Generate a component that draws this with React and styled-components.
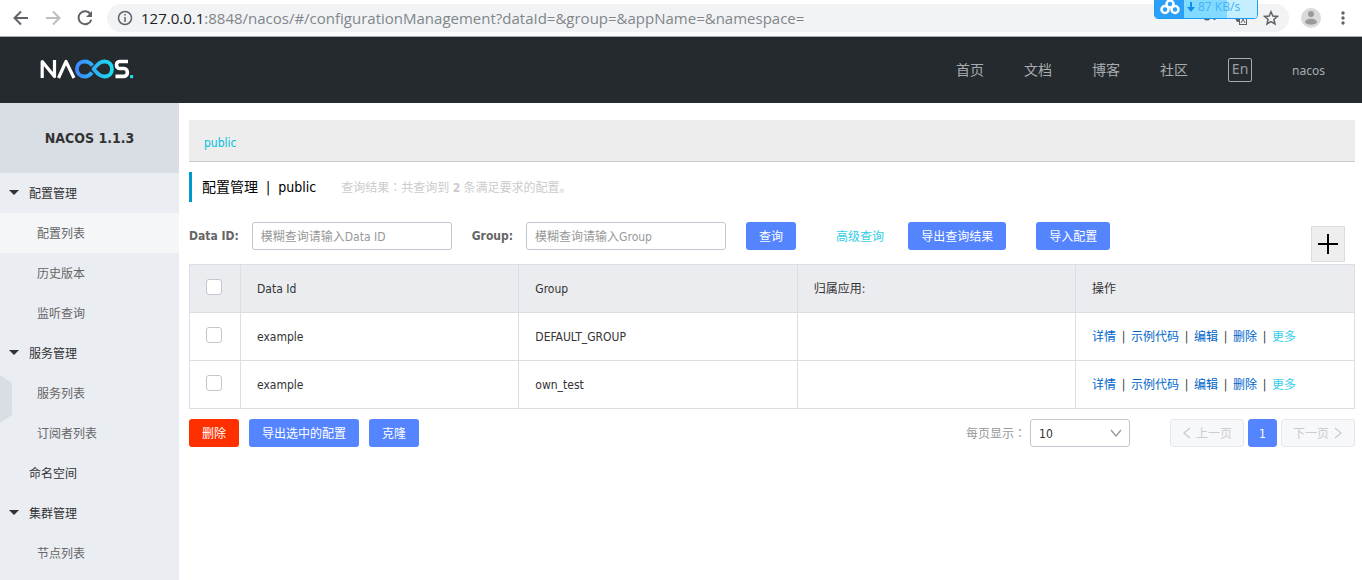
import React from "react";
import styled, { createGlobalStyle, css } from "styled-components";

const GlobalStyle = createGlobalStyle`
  * { box-sizing: border-box; }
  body {
    margin: 0;
    background: #fff;
    color: #333;
    font-family: "DejaVu Sans Condensed", "Noto Sans CJK SC", sans-serif;
    font-size: 12px;
    line-height: 20px;
  }
  button, input, select { font: inherit; }
  a { text-decoration: none; }
`;

const Page = styled.div`
  display: flex;
  flex-direction: column;
  min-height: 100vh;
`;

/* Browser bar */
const BrowserBar = styled.div`
  position: relative;
  display: flex;
  align-items: center;
  height: 37px;
  padding: 0 9px 0 11px;
  border-bottom: 1px solid #a9a9ab;
  background: #fff;
`;
const BarButton = styled.button`
  display: flex;
  flex: none;
  align-items: center;
  justify-content: center;
  width: 20px;
  height: 20px;
  margin-right: ${(p) => p.$gap || 0}px;
  padding: 0;
  border: 0;
  background: none;
  color: ${(p) => p.$color || "#5f6368"};
`;
const Omnibox = styled.div`
  display: flex;
  flex: 1;
  align-items: center;
  gap: 8px;
  height: 28px;
  margin-right: 12px;
  padding: 0 8px 0 10px;
  border-radius: 14px;
  background: #f1f3f4;
`;
const Address = styled.div`
  flex: 1;
  color: #80868b;
  font-family: "Open Sans", sans-serif;
  font-size: 15px;
  white-space: nowrap;
`;
const Host = styled.span`
  color: #202124;
`;
const SpeedWidget = styled.div`
  position: absolute;
  top: -3px;
  right: 104px;
  display: flex;
  width: 104px;
  height: 22px;
  overflow: hidden;
  border: 1px solid #1a9bf5;
  border-radius: 4px;
  background: #fff;
`;
const SpeedLogo = styled.span`
  display: flex;
  align-items: center;
  justify-content: center;
  width: 29px;
  background: #2aa0fb;
`;
const SpeedValue = styled.span`
  display: flex;
  flex: 1;
  align-items: center;
  gap: 3px;
  padding: 0 0 2px 3px;
  background: linear-gradient(90deg, #82dbff 0 43px, #c5eeff 43px);
  color: #47b4f7;
  font-family: "Noto Sans", sans-serif;
  white-space: nowrap;
`;

/* Site header */
const Header = styled.header`
  display: flex;
  align-items: center;
  justify-content: space-between;
  height: 66px;
  padding: 0 37px 0 40px;
  background: #252a2f;
`;
const Nav = styled.nav`
  display: flex;
  align-items: center;
  gap: 40px;
  font-family: "Noto Sans", "Noto Sans CJK SC", sans-serif;
`;
const NavLink = styled.a`
  color: #a9acae;
  font-size: 14px;
`;
const UserLink = styled(NavLink)`
  padding-top: 2px;
  font-size: 12px;
`;
const LangButton = styled.button`
  width: 24px;
  height: 24px;
  padding: 0 0 2px;
  border: 1px solid #a9acae;
  border-radius: 2px;
  background: none;
  color: #999da0;
  font-size: 14px;
  line-height: 20px;
`;

/* Sidebar */
const Body = styled.div`
  display: flex;
  flex: 1;
`;
const Sidebar = styled.aside`
  position: relative;
  flex: none;
  width: 179px;
  background: #eaedf2;
`;
const Version = styled.h1`
  margin: 0;
  background: #d9dee4;
  color: #333;
  font-size: 14px;
  line-height: 70px;
  text-align: center;
`;
const Menu = styled.ul`
  margin: 0;
  padding: 0;
  list-style: none;
`;
const MenuLink = styled.a`
  display: flex;
  align-items: center;
  height: 40px;
  padding-top: 2px;
  padding-left: ${(p) => (p.$sub ? 37 : p.$group ? 9 : 29)}px;
  background: ${(p) => (p.$active ? "#f4f6f8" : "transparent")};
  color: ${(p) => (p.$sub ? "#666" : "#333")};
`;
const Caret = styled.svg`
  width: 10px;
  height: 10px;
  margin-right: 10px;
`;
const Collapse = styled.button`
  position: absolute;
  top: 272px;
  left: 0;
  width: 12px;
  height: 48px;
  padding: 0;
  border: 0;
  background: #d9dee4;
  clip-path: polygon(0 0, 100% 8px, 100% 40px, 0 100%);
`;

/* Content */
const Main = styled.main`
  flex: 1;
  min-width: 0;
  padding: 17px 7px 20px 10px;
`;
const Namespace = styled.div`
  padding: 13px 15px 8px;
  border-bottom: 1px solid #ccc;
  background: #ededed;
`;
const NamespaceLink = styled.a`
  color: #00c1de;
`;
const TitleRow = styled.div`
  display: flex;
  align-items: center;
  gap: 25px;
  height: 30px;
  margin: 10px 0 20px;
  padding-left: 10px;
  border-left: 3px solid #09c;
`;
const Title = styled.h2`
  margin: 0;
  color: #000;
  font-size: 14px;
  font-weight: 400;
`;
const Divider = styled.span`
  margin: 0 8px;
`;
const Summary = styled.span`
  color: #ccc;
`;
const Colon = styled.span`
  font-family: "Noto Sans CJK TC", sans-serif;
`;
const SearchRow = styled.form`
  display: flex;
  align-items: flex-start;
  margin-bottom: 2px;
`;
const Field = styled.label`
  display: flex;
  align-items: center;
  gap: 13px;
  margin-right: 20px;
  color: #666;
  font-weight: 700;
`;
const TextInput = styled.input`
  width: 200px;
  height: 28px;
  padding: 2px 8px 0;
  border: 1px solid #c4c6cf;
  border-radius: 3px;
  color: #333;
  font-weight: 400;
  &::placeholder { color: #999; }
`;
const Button = styled.button`
  height: 28px;
  margin-right: ${(p) => p.$gap || 0}px;
  padding: 2px 13px 0;
  border: 0;
  border-radius: 3px;
  background: ${(p) => (p.$danger ? "#ff3000" : "#5584ff")};
  color: #fff;
`;
const AdvancedLink = styled.a`
  margin: 0 24px 0 40px;
  color: #33cde5;
  line-height: 30px;
`;
const AddButton = styled.button`
  display: flex;
  align-items: center;
  justify-content: center;
  width: 34px;
  height: 36px;
  margin: 4px 10px 0 auto;
  padding: 0;
  border: 1px solid #ddd;
  background: #eee;
  color: #000;
`;

const Table = styled.table`
  width: 100%;
  table-layout: fixed;
  border-collapse: collapse;
`;
const cell = css`
  height: 48px;
  padding: 0 16px;
  border: 1px solid #dcdee3;
  text-align: left;
`;
const HeadCell = styled.th`
  ${cell}
  width: ${(p) => p.$width || "auto"};
  background: #ebecf0;
  font-weight: 400;
`;
const Cell = styled.td`
  ${cell}
`;
const Checkbox = styled.input.attrs({ type: "checkbox" })`
  display: block;
  width: 16px;
  height: 16px;
  margin: 0 0 4px;
  appearance: none;
  border: 1px solid #c4c6cf;
  border-radius: 3px;
  background: #fff;
`;
const Actions = styled.div`
  display: flex;
  gap: 5px;
  white-space: nowrap;
`;
const ActionLink = styled.a`
  color: ${(p) => (p.$more ? "#33cde5" : "#06c")};
`;
const ActionDivider = styled.span`
  width: 5px;
  text-align: center;
`;

const Footer = styled.div`
  display: flex;
  align-items: center;
  justify-content: space-between;
  margin-top: 10px;
`;
const Group = styled.div`
  display: flex;
  align-items: center;
  gap: ${(p) => p.$gap}px;
`;
const SizeLabel = styled.label`
  color: #999;
`;
const SelectBox = styled.div`
  display: grid;
  align-items: center;
  margin-right: 36px;
  > * { grid-area: 1 / 1; }
  > svg { justify-self: end; margin-right: 8px; pointer-events: none; }
`;
const Select = styled.select`
  width: 100px;
  height: 28px;
  padding: 2px 8px 0;
  appearance: none;
  border: 1px solid #c4c6cf;
  border-radius: 3px;
  background: #fff;
  color: #333;
`;
const PageButton = styled.button`
  display: flex;
  align-items: center;
  gap: 4px;
  height: 28px;
  padding: 2px ${(p) => (p.$current ? 10 : 11)}px 0;
  border: 1px solid ${(p) => (p.$current ? "#5584ff" : "#e6e7eb")};
  border-radius: 3px;
  background: ${(p) => (p.$current ? "#5584ff" : "#f7f8fa")};
  color: ${(p) => (p.$current ? "#fff" : "#ccc")};
`;

const Arrow = ({ flip }) => (
  <svg width="16" height="16" viewBox="0 0 16 16" fill="none" stroke="currentColor" strokeWidth="2">
    <path d={flip ? "M1 8H14M8 1.5L14.5 8L8 14.5" : "M15 8H2M8 1.5L1.5 8L8 14.5"} />
  </svg>
);

const Chevron = ({ d, w = 10, h = 14, color = "currentColor" }) => (
  <svg width={w} height={h} viewBox={`0 0 ${w} ${h}`} fill="none" stroke={color} strokeWidth="1.3">
    <path d={d} />
  </svg>
);

const Logo = () => (
  <svg width="94" height="22" viewBox="0 0 94 22" fill="none" role="img" aria-label="Nacos">
    <defs>
      <linearGradient id="loop" gradientUnits="userSpaceOnUse" x1="35" y1="0" x2="74" y2="0">
        <stop offset="0" stopColor="#3f86ff" />
        <stop offset="1" stopColor="#1be0f2" />
      </linearGradient>
    </defs>
    <g strokeWidth="3.2" strokeLinejoin="round">
      <path d="M2.2 19V2.500L14.500 17.500V1" stroke="#fff" />
      <path d="M18.500 19L26 2.500L34 19" stroke="#fff" />
      <path d="M52.500 6.500C50 3.500 48 2.500 45 2.500C40 2.500 36.900 5.800 36.900 10S40 17.500 45 17.500C48 17.500 50 16 52 13.500" stroke="url(#loop)" strokeWidth="3.8" />
      <path d="M53.500 10C58 5 60 2.500 64.500 2.500C69 2.500 72 5.800 72 10S69 17.500 64.500 17.500C60 17.500 58 15 53.500 10Z" stroke="url(#loop)" strokeWidth="3.8" />
      <path d="M88 2.500H79.500C75.500 2.500 75.500 9.500 79.500 9.500H84C88.500 9.500 88.500 17.400 84 17.400H75.500" stroke="#fff" strokeWidth="3.6" />
    </g>
    <rect x="90" y="16" width="3.200" height="3.200" rx="1" fill="#1be0f2" />
  </svg>
);

const menu = [
  { label: "配置管理", group: true },
  { label: "配置列表", sub: true, active: true },
  { label: "历史版本", sub: true },
  { label: "监听查询", sub: true },
  { label: "服务管理", group: true },
  { label: "服务列表", sub: true },
  { label: "订阅者列表", sub: true },
  { label: "命名空间" },
  { label: "集群管理", group: true },
  { label: "节点列表", sub: true },
];

const rows = [
  { id: "example", group: "DEFAULT_GROUP" },
  { id: "example", group: "own_test" },
];

const actions = ["详情", "示例代码", "编辑", "删除"];

export default function App() {
  return (
    <Page>
      <GlobalStyle />
      <BrowserBar>
        <BarButton $gap={12} aria-label="Back"><Arrow /></BarButton>
        <BarButton $gap={12} $color="#bcbec0" aria-label="Forward"><Arrow flip /></BarButton>
        <BarButton $gap={12} aria-label="Reload">
          <svg width="16" height="16" viewBox="0 0 16 16" fill="none">
            <path d="M13.600 4.200A6.500 6.500 0 1 0 14.300 9.700" stroke="currentColor" strokeWidth="2" />
            <path d="M15 1V7H9Z" fill="currentColor" />
          </svg>
        </BarButton>
        <Omnibox>
          <svg width="16" height="16" viewBox="0 0 16 16" fill="none" stroke="#5f6368" strokeWidth="1.5">
            <circle cx="8" cy="8" r="6.500" />
            <path d="M8 7V12M8 4V5.600" />
          </svg>
          <Address><Host>127.0.0.1</Host>:8848/nacos/#/configurationManagement?dataId=&amp;group=&amp;appName=&amp;namespace=</Address>
          <svg width="50" height="20" viewBox="0 0 50 20" fill="none">
            <circle cx="4" cy="9" r="3.500" fill="#5f6368" />
            <path d="M11.500 7V12" stroke="#5f6368" strokeWidth="2" />
            <path d="M30 7H41V14H34Z" fill="#5f6368" />
            <rect x="36.500" y="9.500" width="7" height="7" fill="#f1f3f4" stroke="#5f6368" />
            <path d="M38 15L40 11L42 15" stroke="#5f6368" />
          </svg>
          <BarButton aria-label="Bookmark">
            <svg width="16" height="16" viewBox="0 0 16 16" fill="none" stroke="currentColor" strokeWidth="1.500">
              <path d="M8 1.800L9.800 6L14.400 6.400L10.900 9.400L12 13.900L8 11.500L4 13.900L5.100 9.400L1.600 6.400L6.200 6Z" />
            </svg>
          </BarButton>
        </Omnibox>
        <BarButton $gap={12} aria-label="Profile">
          <svg width="20" height="20" viewBox="0 0 20 20">
            <circle cx="10" cy="10" r="10" fill="#dadada" />
            <circle cx="10" cy="6" r="3" fill="#9a9a9a" />
            <path d="M4 14.500C4 9.500 16 9.500 16 14.500C13 17.500 7 17.500 4 14.500Z" fill="#9a9a9a" />
          </svg>
        </BarButton>
        <BarButton aria-label="Menu">
          <svg width="4" height="14" viewBox="0 0 4 14" fill="currentColor">
            <circle cx="2" cy="2" r="1.700" />
            <circle cx="2" cy="7" r="1.700" />
            <circle cx="2" cy="12" r="1.700" />
          </svg>
        </BarButton>
        <SpeedWidget>
          <SpeedLogo>
            <svg width="20" height="16" viewBox="0 0 20 16" fill="none" stroke="#fff" strokeWidth="2.500">
              <circle cx="10" cy="4" r="3.500" />
              <circle cx="5" cy="9.500" r="3.500" />
              <circle cx="15" cy="9.500" r="3.500" />
            </svg>
          </SpeedLogo>
          <SpeedValue>
            <svg width="8" height="10" viewBox="0 0 8 10">
              <path d="M3 0H5V5H8L4 10L0 5H3Z" fill="#0d8ef0" />
            </svg>
            87 KB/s
          </SpeedValue>
        </SpeedWidget>
      </BrowserBar>

      <Header>
        <Logo />
        <Nav>
          <NavLink href="#home">首页</NavLink>
          <NavLink href="#docs">文档</NavLink>
          <NavLink href="#blog">博客</NavLink>
          <NavLink href="#community">社区</NavLink>
          <LangButton>En</LangButton>
          <UserLink href="#user">nacos</UserLink>
        </Nav>
      </Header>

      <Body>
        <Sidebar>
          <Version>NACOS 1.1.3</Version>
          <Menu>
            {menu.map((m) => (
              <li key={m.label}>
                <MenuLink href="#menu" $sub={m.sub} $group={m.group} $active={m.active}>
                  {m.group && (
                    <Caret viewBox="0 0 10 10"><path d="M0 1H10L5 6Z" fill="#333" /></Caret>
                  )}
                  {m.label}
                </MenuLink>
              </li>
            ))}
          </Menu>
          <Collapse aria-label="Collapse" />
        </Sidebar>

        <Main>
          <Namespace><NamespaceLink href="#public">public</NamespaceLink></Namespace>
          <TitleRow>
            <Title>配置管理<Divider>|</Divider>public</Title>
            <Summary>查询结果<Colon lang="zh-TW">：</Colon>共查询到 <strong>2</strong> 条满足要求的配置。</Summary>
          </TitleRow>

          <SearchRow onSubmit={(e) => e.preventDefault()}>
            <Field>Data ID:<TextInput placeholder="模糊查询请输入Data ID" /></Field>
            <Field>Group:<TextInput placeholder="模糊查询请输入Group" /></Field>
            <Button type="submit">查询</Button>
            <AdvancedLink href="#advanced">高级查询</AdvancedLink>
            <Button type="button" $gap={30}>导出查询结果</Button>
            <Button type="button">导入配置</Button>
            <AddButton type="button" aria-label="Add">
              <svg width="20" height="20" viewBox="0 0 20 20" stroke="currentColor" strokeWidth="2">
                <path d="M0 10H20M10 0V20" />
              </svg>
            </AddButton>
          </SearchRow>

          <Table>
            <thead>
              <tr>
                <HeadCell $width="51px"><Checkbox aria-label="Select all" /></HeadCell>
                <HeadCell>Data Id</HeadCell>
                <HeadCell>Group</HeadCell>
                <HeadCell>归属应用:</HeadCell>
                <HeadCell $width="279px">操作</HeadCell>
              </tr>
            </thead>
            <tbody>
              {rows.map((r) => (
                <tr key={r.group}>
                  <Cell><Checkbox aria-label={r.group} /></Cell>
                  <Cell>{r.id}</Cell>
                  <Cell>{r.group}</Cell>
                  <Cell />
                  <Cell>
                    <Actions>
                      {actions.map((a) => (
                        <React.Fragment key={a}>
                          <ActionLink href="#action">{a}</ActionLink>
                          <ActionDivider>|</ActionDivider>
                        </React.Fragment>
                      ))}
                      <ActionLink href="#more" $more>更多</ActionLink>
                    </Actions>
                  </Cell>
                </tr>
              ))}
            </tbody>
          </Table>

          <Footer>
            <Group $gap={10}>
              <Button $danger>删除</Button>
              <Button>导出选中的配置</Button>
              <Button>克隆</Button>
            </Group>
            <Group $gap={4}>
              <SizeLabel htmlFor="page-size">每页显示<Colon lang="zh-TW">：</Colon></SizeLabel>
              <SelectBox>
                <Select id="page-size" defaultValue="10">
                  <option>10</option>
                  <option>20</option>
                </Select>
                <Chevron w={12} h={8} d="M1 1L6 7L11 1" color="#999" />
              </SelectBox>
              <PageButton disabled><Chevron d="M8 1L2 6L8 11" />上一页</PageButton>
              <PageButton $current>1</PageButton>
              <PageButton disabled>下一页<Chevron d="M2 1L8 6L2 11" /></PageButton>
            </Group>
          </Footer>
        </Main>
      </Body>
    </Page>
  );
}
